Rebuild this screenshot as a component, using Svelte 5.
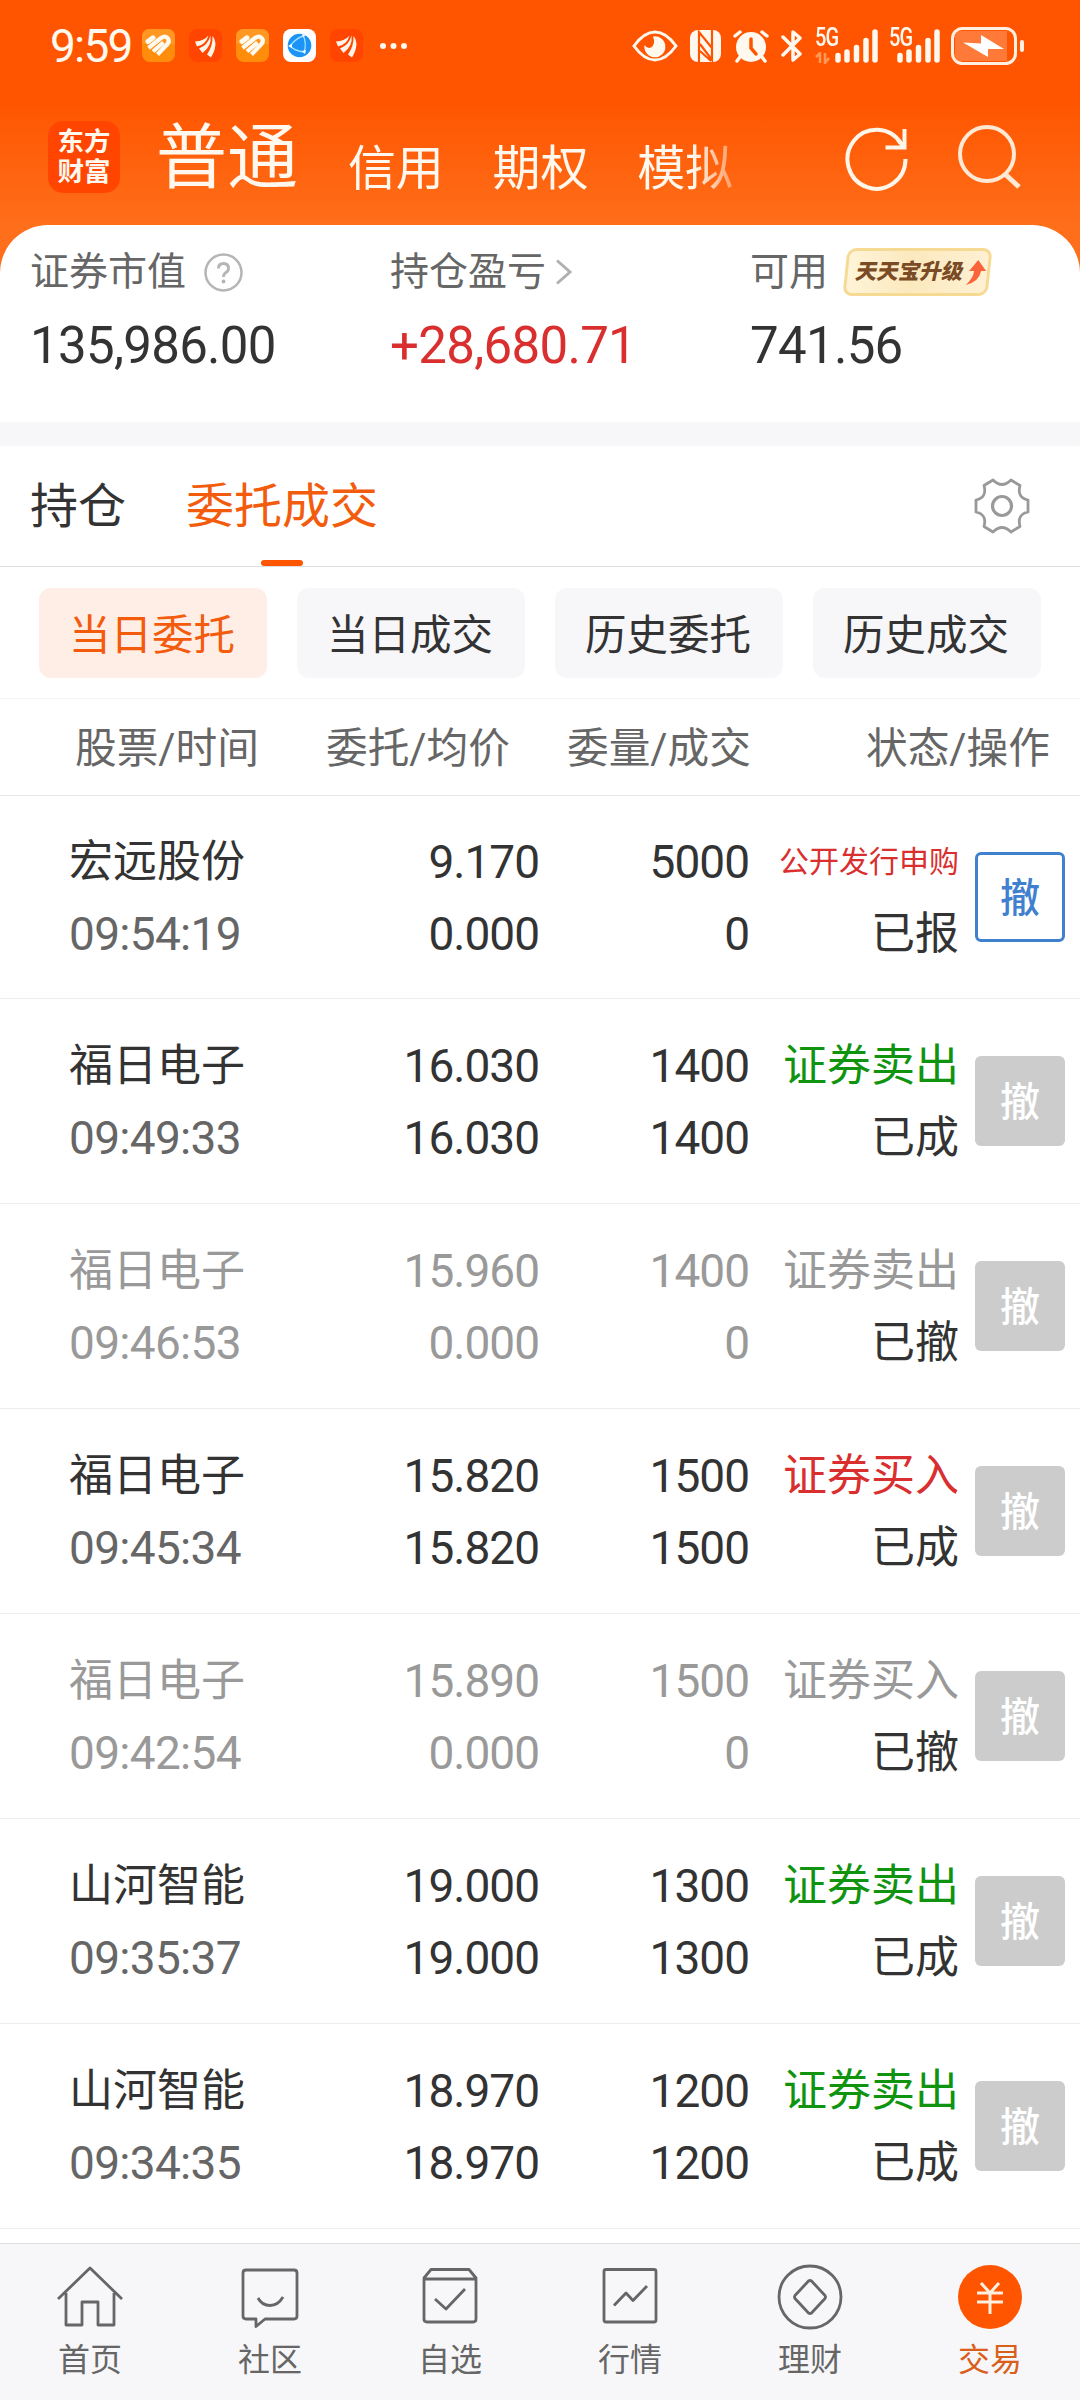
<script>
	const accounts = ['信用', '期权', '模拟'];
	const filters = ['当日委托', '当日成交', '历史委托', '历史成交'];

	const orders = [
		{ name: '宏远股份', time: '09:54:19', price: '9.170', avg: '0.000', qty: '5000', done: '0', side: '公开发行申购', type: 'ipo', status: '已报', active: true },
		{ name: '福日电子', time: '09:49:33', price: '16.030', avg: '16.030', qty: '1400', done: '1400', side: '证券卖出', type: 'sell', status: '已成' },
		{ name: '福日电子', time: '09:46:53', price: '15.960', avg: '0.000', qty: '1400', done: '0', side: '证券卖出', type: 'sell', status: '已撤', cancelled: true },
		{ name: '福日电子', time: '09:45:34', price: '15.820', avg: '15.820', qty: '1500', done: '1500', side: '证券买入', type: 'buy', status: '已成' },
		{ name: '福日电子', time: '09:42:54', price: '15.890', avg: '0.000', qty: '1500', done: '0', side: '证券买入', type: 'buy', status: '已撤', cancelled: true },
		{ name: '山河智能', time: '09:35:37', price: '19.000', avg: '19.000', qty: '1300', done: '1300', side: '证券卖出', type: 'sell', status: '已成' },
		{ name: '山河智能', time: '09:34:35', price: '18.970', avg: '18.970', qty: '1200', done: '1200', side: '证券卖出', type: 'sell', status: '已成' }
	];

	const notices = ['heart', 'east', 'heart', 'globe', 'east'];
	const navItems = ['首页', '社区', '自选', '行情', '理财', '交易'];
</script>

{#snippet bars()}
	<svg class="bars" width="43" height="36" viewBox="0 0 43 36" stroke="#fff8ee" stroke-width="5.5" stroke-linecap="round">
		<path d="M3 27.500v4.500M12 24v8M21.500 19.500v12.500M31 12.500v19.500M40 4v28" />
	</svg>
{/snippet}

<div class="screen">
	<header>
		<div class="status-bar">
			<span class="clock">9:59</span>
			<div class="notices">
				{#each notices as kind}
					<svg width="33" height="33" viewBox="0 0 33 33">
						{#if kind === 'heart'}
							<rect width="33" height="33" rx="8" fill="#ff8c0a" />
							<path d="M0 15V8Q0 0 8 0H25Q33 0 33 8V15z" fill="#ff9722" />
							<g fill="none" stroke="#fffaf0" stroke-width="4.200">
								<path d="M6 12.500L11 8.800" stroke-width="5" stroke-linecap="round" />
								<path d="M6.500 19L19 9Q23.500 6 26 9.500Q28 12.500 25 15.500L15.500 25.500" />
								<path d="M11 22.500L21.500 13.500" />
							</g>
						{:else if kind === 'east'}
							<rect width="33" height="33" rx="8" fill="#ff4500" />
							<g fill="#fff4e8">
								<path d="M6 12.500Q15 12 19.500 6.500Q17 15.500 8 17.500z" />
								<path d="M10 19.500Q19 16 21.500 6.500Q23 17 13.500 24z" />
								<path d="M18 25.500Q24 17 23.500 7Q30 15 22 28.500z" />
							</g>
						{:else}
							<rect width="33" height="33" rx="8" fill="#fff" />
							<circle cx="16.500" cy="16.500" r="11.800" fill="#1c94f7" />
							<path d="M7 17Q14 8 21 7M7 17Q12 22 21 23M20 6Q24 14 21 24" fill="none" stroke="#9fe3ff" stroke-width="1.300" />
							<path d="M5 17l4-2v4zM19 5l4 1-3 2zM19 22l4-1-1 4z" fill="#fff" />
						{/if}
					</svg>
				{/each}
			</div>
			<svg class="more" width="27" height="8" viewBox="0 0 27 8" fill="#fff8ee">
				<circle cx="3" cy="4" r="3" /><circle cx="13.500" cy="4" r="3" /><circle cx="24" cy="4" r="3" />
			</svg>
			<div class="system">
				<svg width="46" height="36" viewBox="0 0 46 36">
					<path d="M2 18Q12 4 23 4T44 18Q34 32 23 32T2 18z" fill="none" stroke="#fff8ee" stroke-width="3" />
					<path d="M21 8.500A10.500 10.500 0 1 1 12.500 17Q15 21 19 19.500Q24 16 21 8.500z" fill="#fff8ee" />
				</svg>
				<svg class="nfc" width="31" height="36" viewBox="0 0 31 36">
					<rect y="2" width="31" height="32" rx="8" fill="#fff8ee" />
					<path d="M9 34V4L22 20M22 2v30L10 16M10 23l11 10" fill="none" stroke="#ff5500" stroke-width="2.200" />
				</svg>
				<svg class="alarm" width="36" height="36" viewBox="0 0 36 36" stroke-linecap="round">
					<circle cx="18" cy="19" r="15" fill="#fff8ee" />
					<path d="M2 8L7 4M34 8L29 4M7 29L4 33M29 29L32 33" stroke="#fff8ee" stroke-width="3.500" />
					<path d="M18 11v9l5 6" fill="none" stroke="#ff5500" stroke-width="3.500" />
				</svg>
				<svg class="bt" width="22" height="36" viewBox="0 0 22 36">
					<path d="M2 9L19 26L12 32V4L19 10L2 27" fill="none" stroke="#fff8ee" stroke-width="3.500" stroke-linejoin="round" stroke-linecap="round" />
				</svg>
				<div class="signal first">
					<span>5G</span>
					<svg class="traffic" width="16" height="12" viewBox="0 0 16 12" fill="none" stroke="#ff9858" stroke-width="2.500"><path d="M1 5L5 1V11M10 1V11L14 6" /></svg>
					{@render bars()}
				</div>
				<div class="signal">
					<span>5G</span>
					{@render bars()}
				</div>
				<svg class="battery" width="73" height="38" viewBox="0 0 73 38">
					<rect x="1.500" y="1.500" width="63" height="35" rx="10" fill="none" stroke="#fff0e2" stroke-width="3" />
					<path d="M10 4H56V34H10Q4 34 4 28V10Q4 4 10 4z" fill="#ff7a38" />
					<path d="M12 15.500L30 16.500V8L53 22L37 22V30z" fill="#fff" />
					<rect x="69" y="13" width="4" height="12" rx="2" fill="#fff0e2" />
				</svg>
			</div>
		</div>

		<div class="account-bar">
			<div class="logo"><span>东方</span><span>财富</span></div>
			<strong>普通</strong>
			<div class="accounts">
				{#each accounts as account}
					<span>{account}</span>
				{/each}
			</div>
			<svg class="refresh" width="64" height="66" viewBox="0 0 64 66" fill="none" stroke="#fff6ea" stroke-width="4">
				<path d="M61.500 34A29 29.500 0 1 1 57 18.500" />
				<path d="M60.500 4V22.500H41.500M60.500 22.500L54 15" />
			</svg>
			<svg class="search" width="64" height="66" viewBox="0 0 64 66" fill="none" stroke="#ffe8d4" stroke-width="4">
				<circle cx="30" cy="29" r="27" />
				<path d="M48 49L62 62" stroke-width="5" />
			</svg>
		</div>
	</header>

	<section class="assets">
		<div>
			<p class="label">
				证券市值
				<svg class="help" width="39" height="39" viewBox="0 0 39 39" fill="none" stroke="#b5b5b5" stroke-width="2.500">
					<circle cx="19.500" cy="19.500" r="18" />
					<path d="M14.500 15.500Q14.500 10.500 19.500 10.500T24.500 15.500Q24.500 18 22 19.500T19.500 24" stroke-width="2.800" />
					<circle cx="19.500" cy="28.500" r="1.900" fill="#b5b5b5" stroke="none" />
				</svg>
			</p>
			<p class="value">135,986.00</p>
		</div>
		<div>
			<p class="label">
				持仓盈亏
				<svg class="chevron" width="18" height="26" viewBox="0 0 18 26" fill="none" stroke="#b0b0b0" stroke-width="3"><path d="M2 1.500L15 13L2 24.500" /></svg>
			</p>
			<p class="value up">+28,680.71</p>
		</div>
		<div>
			<p class="label">
				可用
				<span class="promo">
					<b>天天宝升级</b>
					<svg width="20" height="25" viewBox="0 0 20 25"><path d="M10 0L19 11L14 11Q13 22 0 25Q7 18 7 11H2z" fill="#f9643a" /></svg>
				</span>
			</p>
			<p class="value">741.56</p>
		</div>
	</section>

	<nav class="tabs">
		<span>持仓</span>
		<span class="current">委托成交</span>
		<svg class="gear" width="60" height="60" viewBox="-30 -30 60 60" fill="none" stroke="#999" stroke-linejoin="round">
			<path d="M-9 -26Q0 -17 9 -26L18 -20.500Q14.700 -8.500 26 -6V6Q14.700 8.500 18 20.500L9 26Q0 17 -9 26L-18 20.500Q-14.700 8.500 -26 6V-6Q-14.700 -8.500 -18 -20.500z" stroke-width="2.800" />
			<circle r="9.500" stroke-width="3.200" />
		</svg>
	</nav>

	<div class="filters">
		{#each filters as filter, i}
			<button class:selected={i === 0}>{filter}</button>
		{/each}
	</div>

	<div class="columns">
		<span>股票/时间</span>
		<span>委托/均价</span>
		<span>委量/成交</span>
		<span>状态/操作</span>
	</div>

	<main>
		{#each orders as order}
			<article class:cancelled={order.cancelled}>
				<div class="stock"><span>{order.name}</span><span class="time">{order.time}</span></div>
				<div><span>{order.price}</span><span>{order.avg}</span></div>
				<div><span>{order.qty}</span><span>{order.done}</span></div>
				<div class="state"><span class={order.type}>{order.side}</span><span class="status">{order.status}</span></div>
				<button class:active={order.active}>撤</button>
			</article>
		{/each}
	</main>

	<footer>
		{#each navItems as item, i}
			<div class:chosen={i === 5}>
				<svg width="66" height="66" viewBox="-33 -33 66 66" fill="none" stroke="#666" stroke-width="2.800" stroke-linejoin="round">
					{#if i === 0}
						<path d="M-32 2L0 -29L32 2M-24 -4V28H-8V5H8V28H24V-4" />
					{:else if i === 1}
						<path d="M-24 -27H24Q27 -27 27 -24V19Q27 22 24 22H-5L-14 29.500V22H-24Q-27 22 -27 19V-24Q-27 -27 -24 -27z" />
						<path d="M-12 1Q-8 8.500 0 8.500T13 0" />
					{:else if i === 2}
						<path d="M-26 -19L-19 -27.500H19L26 -19V22Q26 25 23 25H-23Q-26 25 -26 22zM-26 -18H26M-15 2L-4 12L15 -8" />
					{:else if i === 3}
						<rect x="-26" y="-27.500" width="52" height="52.500" rx="2" />
						<path d="M-16 8.500L-4 -4L3 3.500L17 -11" />
					{:else if i === 4}
						<circle r="31" />
						<path d="M-1.500 -16Q0 -17 1.500 -16L15 -1.500Q16 0 15 1.500L1.500 16Q0 17 -1.500 16L-15 1.500Q-16 0 -15 -1.500z" />
					{:else}
						<circle r="32" fill="#ff5500" stroke="none" />
						<path d="M-9 -14L0 -4L9 -14M-13 -4H13M-13 5H13M0 -4V17" stroke="#fff0df" stroke-width="3" />
					{/if}
				</svg>
				<span>{item}</span>
			</div>
		{/each}
	</footer>
</div>

<style>
	:global(body) {
		background: #fff;
	}
	.screen {
		display: flex;
		flex-direction: column;
		width: 1080px;
		height: 2400px;
		overflow: hidden;
		color: #333;
		background: #fff;
		font-family: Roboto, "Noto Sans CJK SC", sans-serif;
	}
	svg {
		display: block;
		flex: none;
	}
	p {
		margin: 0;
	}
	button {
		padding: 0;
		border: none;
		font-family: inherit;
		color: inherit;
	}
	header {
		height: 273px;
		margin-bottom: -48px;
		flex: none;
		background: linear-gradient(#ff5500 100px, #ff6e1a 225px);
	}
	.status-bar {
		display: flex;
		align-items: center;
		height: 91px;
		padding: 0 56px 0 50px;
		color: #fff8ee;
	}
	.clock {
		width: 92px;
		font-size: 46px;
		line-height: 60px;
		letter-spacing: -1.8px;
	}
	.notices {
		display: flex;
		gap: 14px;
	}
	.more {
		margin-left: 17px;
	}
	.system {
		display: flex;
		align-items: center;
		margin-left: auto;
	}
	.nfc,
	.alarm,
	.bt {
		margin-left: 12px;
	}
	.signal {
		position: relative;
		width: 51px;
		height: 36px;
		margin-left: 11px;
	}
	.signal.first {
		width: 63px;
		margin-left: 12px;
	}
	.signal span {
		position: absolute;
		top: 0;
		left: 0;
		font-size: 25px;
		font-weight: 500;
		line-height: 20px;
		letter-spacing: -1px;
		transform: scaleX(0.8);
		transform-origin: left;
	}
	.traffic {
		position: absolute;
		left: 0;
		bottom: 0;
	}
	.bars {
		margin-left: auto;
	}
	.battery {
		margin-left: 11px;
	}
	.account-bar {
		display: flex;
		height: 134px;
		padding-left: 48px;
		color: #fff8ee;
	}
	.logo {
		display: flex;
		flex-direction: column;
		justify-content: center;
		align-items: center;
		width: 72px;
		height: 72px;
		margin-top: 30px;
		border-radius: 15px;
		font-size: 26.5px;
		font-weight: 700;
		line-height: 30px;
		background: #ff4500;
	}
	strong {
		margin: 25px 0 0 36px;
		width: 144px;
		font-size: 71px;
		font-weight: 400;
		line-height: 84px;
	}
	.accounts {
		display: flex;
		gap: 49px;
		margin: 48px 0 0 48px;
		width: 390px;
		height: 60px;
		font-size: 48px;
		line-height: 60px;
		letter-spacing: -0.2px;
		-webkit-mask-image: linear-gradient(90deg, #000 345px, transparent 410px);
		mask-image: linear-gradient(90deg, #000 345px, transparent 410px);
	}
	.refresh {
		margin: 34px 0 0 106px;
	}
	.search {
		margin: 34px 0 0 49px;
	}
	.assets {
		display: grid;
		grid-template-columns: 360px 360px 1fr;
		height: 197px;
		flex: none;
		padding-left: 30px;
		box-sizing: border-box;
		border-radius: 48px 48px 0 0;
		background: #fff;
	}
	.label {
		display: flex;
		align-items: center;
		height: 48px;
		margin-top: 23px;
		font-size: 39px;
		line-height: 48px;
		color: #666;
	}
	.help {
		margin-left: 18px;
	}
	.chevron {
		margin-left: 9px;
	}
	.promo {
		display: flex;
		align-items: center;
		gap: 4px;
		width: 145px;
		height: 48px;
		margin-left: 17px;
		padding-left: 8px;
		box-sizing: border-box;
		border: 3px solid #f6d993;
		border-radius: 9px;
		white-space: nowrap;
		transform: skewX(-6deg);
		background: linear-gradient(90deg, #fff4d8, #fbe9be 45%, #fff0d3);
	}
	.promo b {
		width: 107px;
		font-size: 21.5px;
		font-weight: 900;
		line-height: 30px;
		color: #7a4b25;
		transform: skewX(-7deg);
	}
	.value {
		margin-top: 20px;
		font-size: 51px;
		line-height: 60px;
		letter-spacing: -0.7px;
	}
	.up {
		color: #d92f2f;
	}
	.tabs {
		display: flex;
		flex: none;
		height: 121px;
		padding-left: 30px;
		box-sizing: border-box;
		border-bottom: 1px solid #ddd;
		margin-top: 24px;
		box-shadow: 0 -24px #f7f7fa;
		font-size: 48px;
		line-height: 122px;
	}
	.current {
		position: relative;
		margin-left: 60px;
		color: #f35b0d;
	}
	.current::after {
		content: "";
		position: absolute;
		left: 75px;
		bottom: 0;
		width: 42px;
		height: 6px;
		border-radius: 3px;
		background: #ff5500;
	}
	.gear {
		margin: 30px 48px 0 auto;
	}
	.filters {
		display: grid;
		grid-template-columns: repeat(4, 228px);
		gap: 30px;
		flex: none;
		height: 132px;
		padding: 21px 39px 0;
		box-sizing: border-box;
		border-bottom: 1px solid #f4f4f4;
	}
	.filters button {
		height: 90px;
		padding: 0 2px 3px 0;
		border-radius: 12px;
		font-size: 41.5px;
		background: #f7f7fa;
	}
	.filters .selected {
		color: #f35b0d;
		background: #ffeee5;
	}
	.columns {
		display: grid;
		grid-template-columns: 251px 241px 299px 1fr;
		flex: none;
		height: 97px;
		padding-left: 75px;
		box-sizing: border-box;
		border-bottom: 1px solid #e8e8e8;
		font-size: 41.7px;
		line-height: 100px;
		color: #666;
	}
	article {
		display: grid;
		grid-template-columns: 231px 239px 210px 210px 90px;
		align-items: center;
		height: 205px;
		padding-left: 69px;
		box-sizing: border-box;
		border-bottom: 1px solid #ececec;
	}
	article:first-child {
		height: 203px;
	}
	article div {
		display: flex;
		flex-direction: column;
		align-items: flex-end;
		padding-top: 2px;
		font-size: 46px;
		line-height: 72px;
		letter-spacing: -1px;
	}
	article:first-child div {
		padding-top: 1px;
	}
	article .stock {
		align-items: flex-start;
	}
	.stock span:first-child,
	.state span {
		font-size: 44px;
		letter-spacing: 0;
	}
	.time {
		color: #666;
		letter-spacing: -0.7px;
	}
	.state .ipo {
		font-size: 30px;
		color: #d92f2f;
	}
	.sell {
		color: #109410;
	}
	.buy {
		color: #d92f2f;
	}
	.cancelled span {
		color: #999;
	}
	.cancelled .status {
		color: #333;
	}
	article button {
		width: 90px;
		height: 90px;
		margin-left: 16px;
		padding-bottom: 4px;
		border-radius: 6px;
		font-size: 40px;
		font-weight: 500;
		color: #fff;
		background: #ccc;
	}
	article .active {
		border: 3px solid #3f80cf;
		color: #3f80cf;
		background: #fff;
	}
	footer {
		display: grid;
		grid-template-columns: repeat(6, 180px);
		flex: 1;
		margin-top: 14px;
		border-top: 1px solid #ddd;
		background: #f7f7fa;
	}
	footer div {
		display: flex;
		flex-direction: column;
		align-items: center;
		padding-top: 20px;
		font-size: 32px;
		line-height: 40px;
		color: #666;
	}
	footer span {
		margin-top: 10px;
	}
	.chosen span {
		color: #d9601c;
	}
</style>
